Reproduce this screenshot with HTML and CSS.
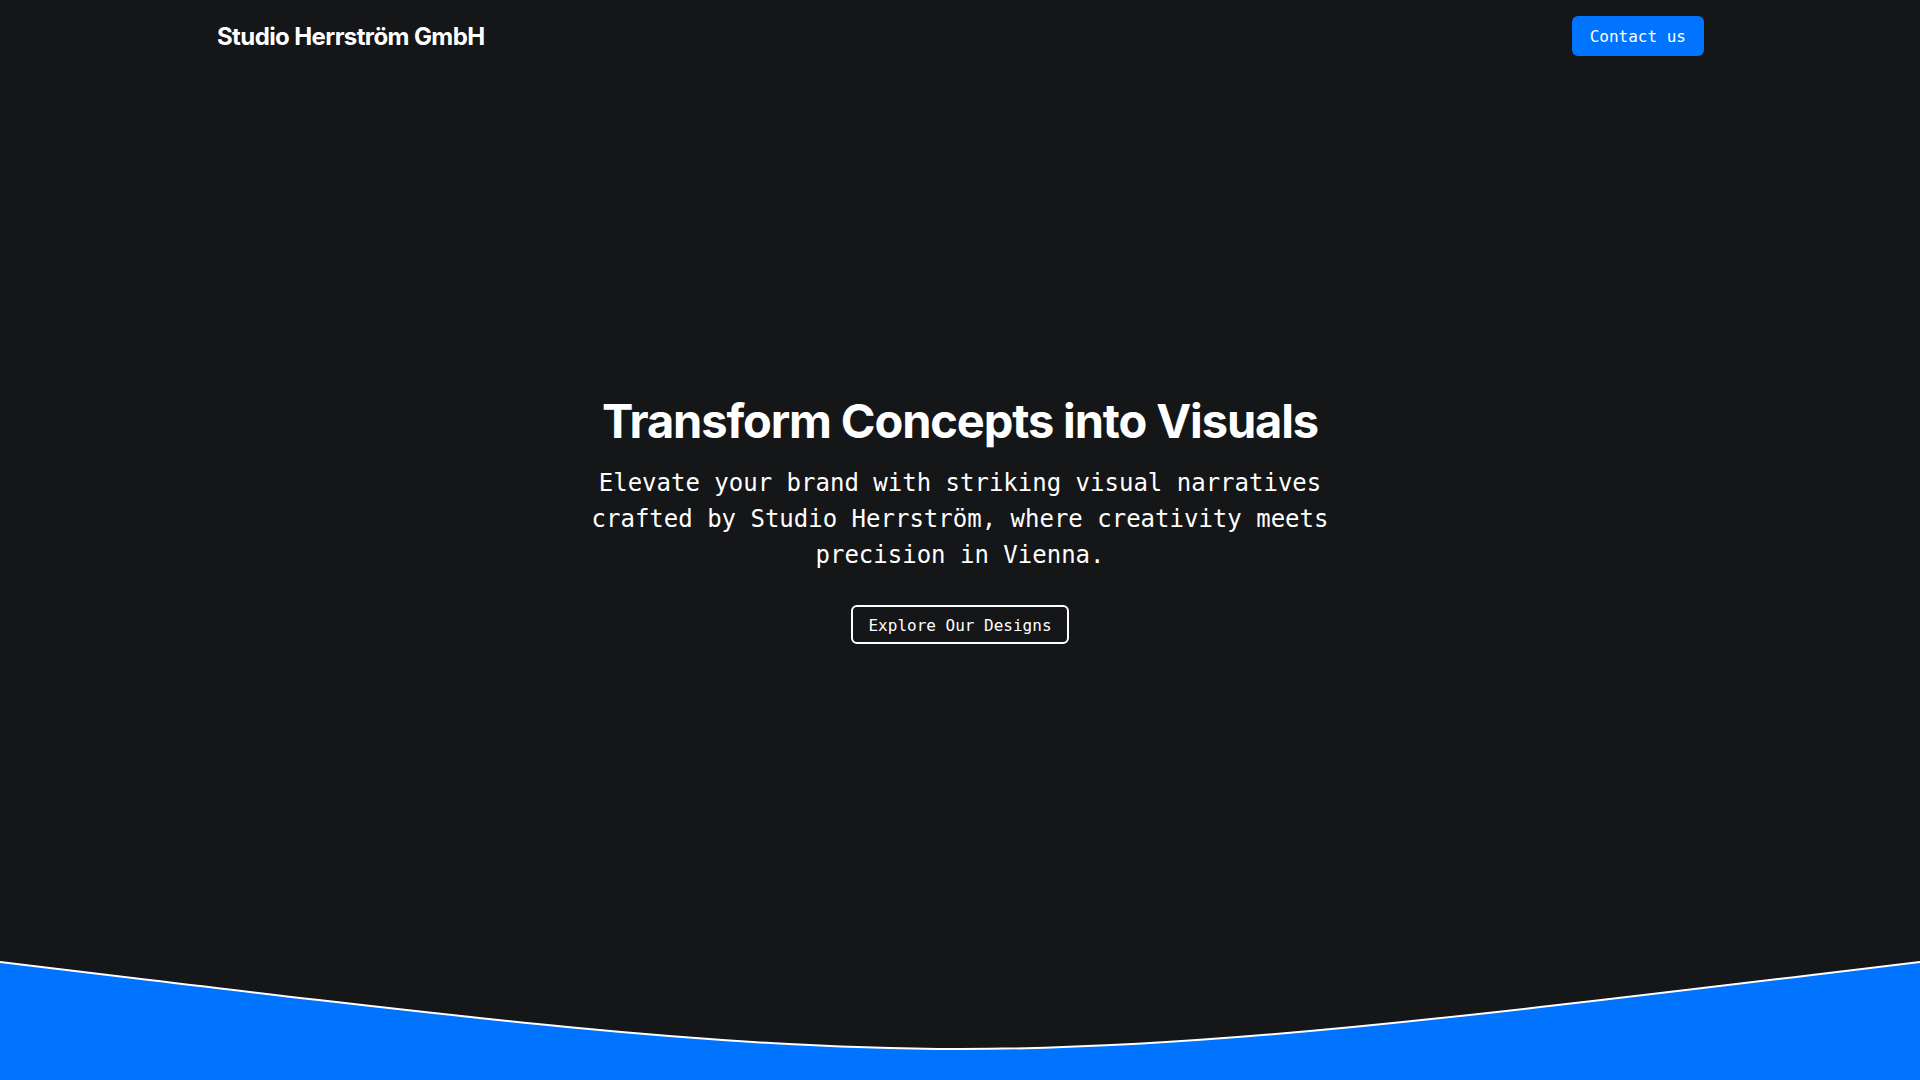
FILE: index.html
```html
<!DOCTYPE html>
<html lang="en">
<head>
<meta charset="utf-8">
<title>Studio Herrström GmbH</title>
<link rel="stylesheet" href="styles.css">
</head>
<body>
<div class="page">
  <header class="header">
    <div class="header-inner">
      <div class="logo">Studio Herrström GmbH</div>
      <a class="btn-contact" href="#">Contact us</a>
    </div>
  </header>
  <main class="hero">
    <h1 class="hero-title">Transform Concepts into Visuals</h1>
    <p class="hero-text">Elevate your brand with striking visual narratives crafted by Studio Herrström, where creativity meets precision in Vienna.</p>
    <a class="btn-outline" href="#">Explore Our Designs</a>
  </main>
  <svg class="wave" viewBox="0 0 1920 120" preserveAspectRatio="none" aria-hidden="true">
    <path d="M0,2 C960,118 960,118 1920,2 L1920,120 L0,120 Z" fill="#0073ff"/>
    <path d="M0,2 C960,118 960,118 1920,2" fill="none" stroke="#ffffff" stroke-width="2"/>
  </svg>
</div>
</body>
</html>
```
FILE: styles.css
```css
* { box-sizing: border-box; }
html, body { margin: 0; padding: 0; }
body {
  background: #151618;
  color: #ffffff;
  font-family: "DejaVu Sans Mono", "Liberation Mono", monospace;
}
.page {
  height: 100vh;
  display: flex;
  flex-direction: column;
  overflow: hidden;
}
.header {
  height: 72px;
  flex: none;
}
.header-inner {
  max-width: 1536px;
  margin: 0 auto;
  padding: 0 24px;
  height: 100%;
  display: flex;
  align-items: center;
  justify-content: space-between;
}
.logo {
  font-family: Inter, "Noto Sans", sans-serif;
  font-weight: 700;
  font-size: 24px;
  letter-spacing: -0.6px;
  line-height: 32px;
  padding-top: 2px;
  padding-left: 1px;
}
.btn-contact {
  display: inline-block;
  background: #0073ff;
  color: #ffffff;
  text-decoration: none;
  font-family: "DejaVu Sans Mono", "Liberation Mono", monospace;
  font-size: 16px;
  line-height: 24px;
  padding: 9px 18px 7px;
  border-radius: 6px;
}
.hero {
  flex: 1;
  display: flex;
  flex-direction: column;
  align-items: center;
  justify-content: center;
  text-align: center;
  padding-top: 5px;
}
.hero-title {
  margin: 0;
  font-family: Inter, "Noto Sans", sans-serif;
  font-weight: 700;
  font-size: 47px;
  line-height: 56px;
  letter-spacing: -1.13px;
}
.hero-text {
  margin: 16px 0 0;
  max-width: 768px;
  font-size: 24px;
  line-height: 36px;
}
.btn-outline {
  margin-top: 32px;
  display: inline-block;
  color: #ffffff;
  text-decoration: none;
  font-size: 16px;
  line-height: 23px;
  padding: 7px 15px 5px;
  border: 2px solid #ffffff;
  border-radius: 6px;
}
.wave {
  display: block;
  flex: none;
  width: 100%;
  height: 120px;
}
```
